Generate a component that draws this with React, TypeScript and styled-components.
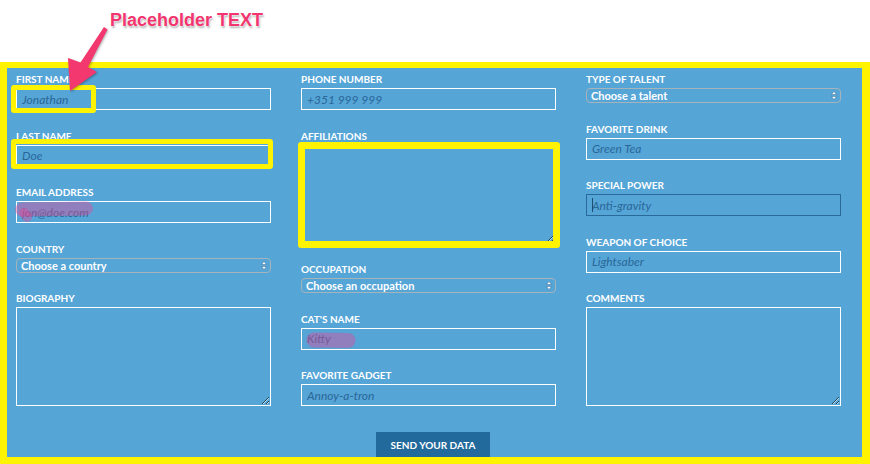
import React from "react";
import styled, { createGlobalStyle } from "styled-components";

const GlobalStyle = createGlobalStyle`
  html, body { margin: 0; padding: 0; background: #ffffff; }
  body { font-family: Lato, "Open Sans", sans-serif; }
  * { box-sizing: border-box; }
`;

const YELLOW = "#fff300";

const Page = styled.div`
  position: relative;
  width: 870px;
  height: 464px;
  display: flex;
  flex-direction: column;
  background: #ffffff;
  overflow: hidden;
`;

const Header = styled.header`
  height: 62px;
  flex: none;
  padding: 11px 0 0 110px;
  font: bold 18px/18px "Liberation Sans", Arial, sans-serif;
  color: #f2356e;
  text-shadow: 0 0 1px #fff, 0 0 2px #fff, 1px 2px 2px rgba(0, 0, 0, 0.3);
`;

const ArrowSvg = styled.svg`
  position: absolute;
  left: 0;
  top: 0;
  z-index: 5;
  pointer-events: none;
  filter: drop-shadow(1px 1px 1px rgba(0, 0, 0, 0.3));
`;

const Frame = styled.form`
  flex: 1;
  display: flex;
  flex-direction: column;
  border-style: solid;
  border-color: ${YELLOW};
  border-width: 6px 8px 7px 7px;
  background: #55a5d7;
  padding: 6px 21px 0 9px;
  overflow: hidden;
`;

const Grid = styled.div`
  display: grid;
  grid-template-columns: repeat(3, 255px);
  column-gap: 30px;
  align-items: start;
`;

const Column = styled.div`
  display: flex;
  flex-direction: column;
`;

const Field = styled.div`
  display: flex;
  flex-direction: column;
  margin-bottom: 20.5px;
`;

const Label = styled.label`
  display: block;
  font-family: Lato, sans-serif;
  font-weight: 700;
  font-size: 10px;
  line-height: 10px;
  margin-bottom: 4px;
  color: #ffffff;
  text-transform: uppercase;
  white-space: nowrap;
`;

const Control = styled.div`
  position: relative;
  width: 255px;
`;

const TextInput = styled.input<{ $focused?: boolean }>`
  display: block;
  width: 255px;
  height: 22px;
  margin: 0;
  padding: 0 5px;
  border: 1px solid ${(p) => (p.$focused ? "#2a6a9b" : "#ffffff")};
  border-radius: 0;
  background: transparent;
  font-family: Lato, sans-serif;
  font-style: italic;
  font-size: 12px;
  color: #1f5b88;
  outline: none;
  &::placeholder {
    color: #2a6797;
    opacity: 1;
  }
`;

const TextArea = styled.textarea`
  display: block;
  width: 255px;
  height: 99px;
  margin: 0;
  padding: 4px 5px;
  border: 1px solid #ffffff;
  border-radius: 0;
  background: transparent;
  resize: both;
  outline: none;
  font-family: Lato, sans-serif;
  font-size: 12px;
`;

const SelectBox = styled.select`
  display: block;
  width: 255px;
  height: 15px;
  margin: 0;
  padding: 0 16px 0 4px;
  border: 1px solid #a7b3bb;
  border-radius: 4px;
  background: transparent;
  appearance: none;
  -webkit-appearance: none;
  font-family: Lato, sans-serif;
  font-weight: 700;
  font-size: 11px;
  line-height: 13px;
  color: #ffffff;
  outline: none;
`;

const SelectArrows = styled.svg`
  position: absolute;
  right: 4px;
  top: 3px;
  pointer-events: none;
`;

const Caret = styled.span`
  position: absolute;
  left: 6px;
  top: 4px;
  width: 1px;
  height: 14px;
  background: #1b4d75;
`;

const Highlight = styled.span<{
  $left: number;
  $top: number;
  $w: number;
  $h: number;
  $thick: number;
}>`
  position: absolute;
  left: ${(p) => p.$left}px;
  top: ${(p) => p.$top}px;
  width: ${(p) => p.$w}px;
  height: ${(p) => p.$h}px;
  border: ${(p) => p.$thick}px solid ${YELLOW};
  border-radius: 3px;
  pointer-events: none;
  z-index: 2;
`;

const Scribble = styled.svg`
  position: absolute;
  left: 0;
  top: 0;
  overflow: visible;
  pointer-events: none;
  z-index: 1;
`;

const ButtonRow = styled.div`
  display: flex;
  justify-content: center;
  padding-left: 9px;
  margin-top: 5.5px;
`;

const SubmitButton = styled.button`
  width: 114px;
  height: 25px;
  border: none;
  border-radius: 0;
  background: #236a9c;
  color: #ffffff;
  font-family: Lato, sans-serif;
  font-weight: 700;
  font-size: 10px;
  text-transform: uppercase;
  padding: 0;
`;

const Arrows = () => (
  <SelectArrows width="6" height="9" viewBox="0 0 6 9">
    <path d="M3 0.5 L5.5 3.5 L0.5 3.5 Z" fill="#ffffff" stroke="#3a6d92" strokeWidth="0.5" />
    <path d="M3 8.5 L5.5 5.5 L0.5 5.5 Z" fill="#ffffff" stroke="#3a6d92" strokeWidth="0.5" />
  </SelectArrows>
);

type InputFieldProps = {
  label: string;
  placeholder: string;
  focused?: boolean;
  children?: React.ReactNode;
};

const InputField = ({ label, placeholder, focused, children }: InputFieldProps) => (
  <Field>
    <Label>{label}</Label>
    <Control>
      <TextInput type="text" placeholder={placeholder} $focused={focused} readOnly />
      {focused && <Caret />}
      {children}
    </Control>
  </Field>
);

const SelectField = ({ label, option }: { label: string; option: string }) => (
  <Field>
    <Label>{label}</Label>
    <Control>
      <SelectBox defaultValue="">
        <option value="">{option}</option>
      </SelectBox>
      <Arrows />
    </Control>
  </Field>
);

const AreaField = ({ label, children }: { label: string; children?: React.ReactNode }) => (
  <Field>
    <Label>{label}</Label>
    <Control>
      <TextArea />
      {children}
    </Control>
  </Field>
);

const BLOB = "rgba(228, 72, 150, 0.42)";

export default function App() {
  return (
    <>
      <GlobalStyle />
      <Page>
        <Header>Placeholder TEXT</Header>
        <ArrowSvg width="120" height="100" viewBox="0 0 120 100">
          <path
            d="M104 27 L107.5 29.5 L88 67 L97 72 L70 91 L68 58 L80.5 62.5 Z"
            fill="#f3376f"
          />
        </ArrowSvg>
        <Frame onSubmit={(e) => e.preventDefault()}>
          <Grid>
            <Column>
              <InputField label="First name" placeholder="Jonathan">
                <Highlight $left={-5} $top={-3} $w={85} $h={28} $thick={5} />
              </InputField>
              <InputField label="Last name" placeholder="Doe">
                <Highlight $left={-5} $top={-5.5} $w={262} $h={30} $thick={5} />
              </InputField>
              <InputField label="Email address" placeholder="jon@doe.com">
                <Scribble width="80" height="24">
                  <path d="M6 8.5 L70 7.5" stroke={BLOB} strokeWidth="14" strokeLinecap="round" fill="none" />
                  <path d="M8 12 L11 16" stroke={BLOB} strokeWidth="10" strokeLinecap="round" fill="none" />
                </Scribble>
              </InputField>
              <SelectField label="Country" option="Choose a country" />
              <AreaField label="Biography" />
            </Column>
            <Column>
              <InputField label="Phone number" placeholder="+351 999 999" />
              <AreaField label="Affiliations">
                <Highlight $left={-3} $top={-2.5} $w={262} $h={106} $thick={7} />
              </AreaField>
              <SelectField label="Occupation" option="Choose an occupation" />
              <InputField label="Cat's name" placeholder="Kitty">
                <Scribble width="60" height="24">
                  <path d="M13 12 L47 12.5" stroke={BLOB} strokeWidth="15" strokeLinecap="round" fill="none" />
                </Scribble>
              </InputField>
              <InputField label="Favorite gadget" placeholder="Annoy-a-tron" />
            </Column>
            <Column>
              <SelectField label="Type of talent" option="Choose a talent" />
              <InputField label="Favorite drink" placeholder="Green Tea" />
              <InputField label="Special power" placeholder="Anti-gravity" focused />
              <InputField label="Weapon of choice" placeholder="Lightsaber" />
              <AreaField label="Comments" />
            </Column>
          </Grid>
          <ButtonRow>
            <SubmitButton type="submit">Send your data</SubmitButton>
          </ButtonRow>
        </Frame>
      </Page>
    </>
  );
}
